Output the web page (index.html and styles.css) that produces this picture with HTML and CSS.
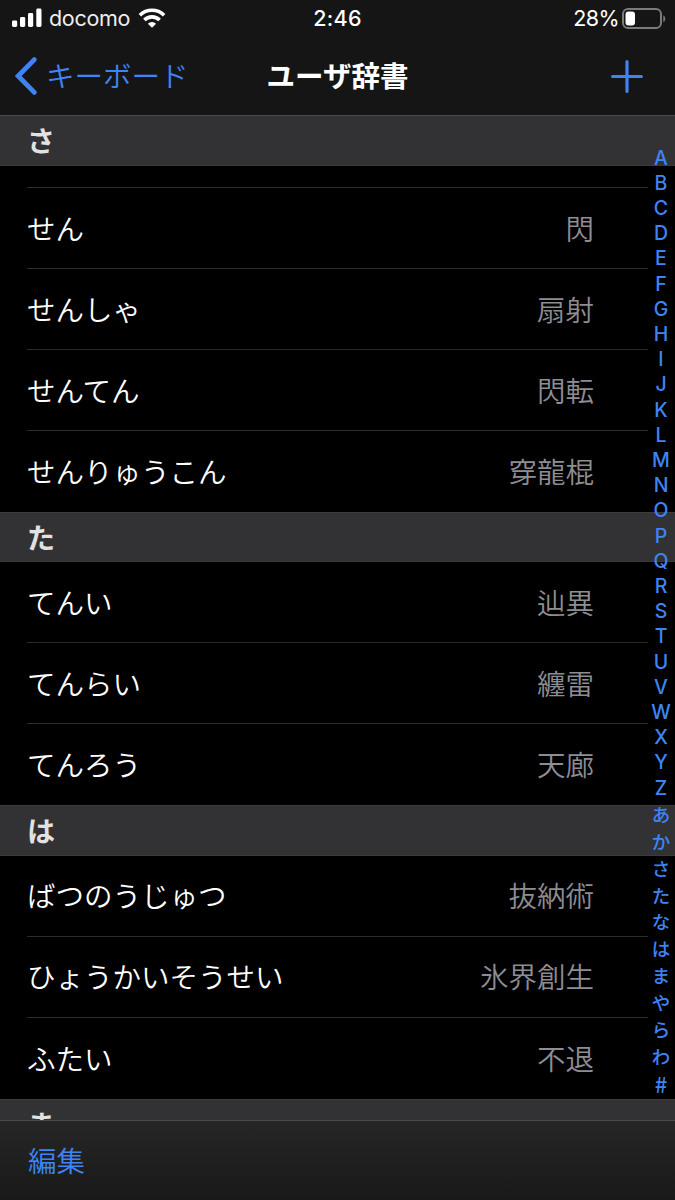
FILE: index.html
```
<!DOCTYPE html>
<html lang="ja">
<head>
  <meta charset="UTF-8" />
  <meta name="viewport" content="width=device-width, initial-scale=1.0"/>
  <title>ユーザ辞書</title>
  <link rel="stylesheet" href="styles.css">
</head>
<body>
  <div class="screen">
    <header class="top">
      <div class="status-bar">
        <div class="carrier">
          <svg class="signal" width="30" height="20" viewBox="0 0 30 20" fill="#fff">
            <rect x="0" y="12.5" width="5.2" height="6.5" rx="1.4"/>
            <rect x="8" y="9" width="5.2" height="10" rx="1.4"/>
            <rect x="16" y="5" width="5.2" height="14" rx="1.4"/>
            <rect x="24.3" y="0.5" width="5.2" height="18.5" rx="1.4"/>
          </svg>
          <span class="carrier-name">docomo</span>
          <svg class="wifi" width="28" height="20" viewBox="0 0 28 20" fill="none" stroke="#fff" stroke-width="3.6">
            <path d="M1.9 7.3a17.2 17.2 0 0 1 24.2 0"/>
            <path d="M6.4 12a10.8 10.8 0 0 1 15.2 0"/>
            <path d="M14 19.8l-4.1-4.1a5.8 5.8 0 0 1 8.2 0z" fill="#fff" stroke="none"/>
          </svg>
        </div>
        <div class="clock">2:46</div>
        <div class="battery">
          <span class="percent">28%</span>
          <svg width="44" height="22" viewBox="0 0 44 22">
            <rect x="1" y="1" width="38" height="19" rx="5" fill="none" stroke="#7b7b7b" stroke-width="2"/>
            <rect x="3.5" y="3.5" width="9.5" height="14" rx="3" fill="#fff"/>
            <path d="M41.3 7.2q2 1 2 3.5t-2 3.5z" fill="#7b7b7b"/>
          </svg>
        </div>
      </div>
      <nav class="nav-bar">
        <a class="back">
          <svg width="22" height="38" viewBox="0 0 22 38" fill="none" stroke="#3f84f3" stroke-width="4.8" stroke-linecap="round" stroke-linejoin="miter">
            <path d="M19.3 2.6L3.2 19l16.1 16.4"/>
          </svg>
          <span>キーボード</span>
        </a>
        <h1 class="title">ユーザ辞書</h1>
        <a class="add">
          <svg width="32" height="33" viewBox="0 0 32 33" stroke="#3f84f3" stroke-width="3.2" stroke-linecap="round">
            <path d="M1.6 16.5h28.8M16 1.6v29.8"/>
          </svg>
        </a>
      </nav>
    </header>

    <main class="list">
      <section>
        <h2 class="section-title pinned">さ</h2>
        <div class="row partial"></div>
        <div class="row"><span>せん</span><span class="word">閃</span></div>
        <div class="row"><span>せんしゃ</span><span class="word">扇射</span></div>
        <div class="row"><span>せんてん</span><span class="word">閃転</span></div>
        <div class="row"><span>せんりゅうこん</span><span class="word">穿龍棍</span></div>
      </section>
      <section>
        <h2 class="section-title">た</h2>
        <div class="row"><span>てんい</span><span class="word">辿異</span></div>
        <div class="row"><span>てんらい</span><span class="word">纏雷</span></div>
        <div class="row"><span>てんろう</span><span class="word">天廊</span></div>
      </section>
      <section>
        <h2 class="section-title">は</h2>
        <div class="row"><span>ばつのうじゅつ</span><span class="word">抜納術</span></div>
        <div class="row"><span>ひょうかいそうせい</span><span class="word">氷界創生</span></div>
        <div class="row"><span>ふたい</span><span class="word">不退</span></div>
      </section>
      <section>
        <h2 class="section-title">ま</h2>
      </section>
    </main>

    <footer class="toolbar"><a>編集</a></footer>

    <div class="index">
      <span>A</span><span>B</span><span>C</span><span>D</span><span>E</span><span>F</span><span>G</span>
      <span>H</span><span>I</span><span>J</span><span>K</span><span>L</span><span>M</span><span>N</span>
      <span>O</span><span>P</span><span>Q</span><span>R</span><span>S</span><span>T</span><span>U</span>
      <span>V</span><span>W</span><span>X</span><span>Y</span><span>Z</span>
      <span class="kana">あ</span><span class="kana">か</span><span class="kana">さ</span><span class="kana">た</span>
      <span class="kana">な</span><span class="kana">は</span><span class="kana">ま</span><span class="kana">や</span>
      <span class="kana">ら</span><span class="kana">わ</span><span class="kana hash">#</span>
    </div>
  </div>
</body>
</html>
```

FILE: styles.css
```
* {
  box-sizing: border-box;
}
body {
  margin: 0;
  background: #000;
  color: #fff;
  font-family: Inter, 'Noto Sans CJK JP', sans-serif;
}
.screen {
  position: relative;
  width: 675px;
  height: 1200px;
  display: flex;
  flex-direction: column;
  overflow: hidden;
}

/* status bar + navigation */
.top {
  height: 115px;
  flex: none;
  background: #151515;
}
.status-bar {
  height: 37px;
  padding: 0 9px 0 12px;
  display: grid;
  grid-template-columns: 1fr auto 1fr;
  align-items: center;
  font-size: 21.5px;
  line-height: 37px;
}
.carrier {
  display: flex;
  align-items: center;
}
.signal {
  margin-top: -2px;
}
.carrier-name {
  margin-left: 7px;
  color: #eee;
  letter-spacing: -0.3px;
}
.wifi {
  margin: -1px 0 0 8px;
}
.clock {
  margin-right: 3px;
  font-weight: 550;
  letter-spacing: 0.3px;
}
.battery {
  display: flex;
  justify-content: flex-end;
  align-items: center;
  gap: 3px;
}
.percent {
  letter-spacing: -0.6px;
}
.nav-bar {
  height: 78px;
  padding: 0 32px 0 15px;
  display: grid;
  grid-template-columns: 1fr auto 1fr;
  align-items: center;
  font-family: 'Noto Sans CJK JP', sans-serif;
}
.back {
  display: flex;
  align-items: center;
  gap: 9px;
  color: #3f84f3;
  font-size: 28.5px;
  font-weight: 350;
}
.back span,
.title {
  padding-bottom: 4px;
}
.title {
  margin: 0 -17px 0 0;
  font-size: 28.5px;
  font-weight: 700;
}
.add {
  display: flex;
  justify-content: flex-end;
}

/* word list */
.list {
  flex: 1;
  min-height: 0;
  overflow: hidden;
  font-family: 'Noto Sans CJK JP', sans-serif;
}
.section-title {
  height: 50.4px;
  margin: 0;
  padding-left: 27px;
  background: #323234;
  border-top: 1px solid #3c3c3e;
  border-bottom: 1px solid #3a3a3c;
  color: #e2e2e3;
  font-size: 28px;
  font-weight: 700;
  line-height: 48px;
}
.section-title.pinned {
  height: 51px;
  border-top-color: #4a4a4b;
}
.row {
  height: 81px;
  margin: 0 27px;
  padding: 0 54px 2px 0;
  display: flex;
  align-items: center;
  justify-content: space-between;
  border-bottom: 1px solid #2c2c2e;
  font-size: 28.5px;
  font-weight: 350;
}
.row:last-child {
  border-bottom: none;
}
.row.partial {
  height: 22px;
}
.word {
  color: #8d8d92;
}

/* bottom toolbar */
.toolbar {
  height: 80px;
  flex: none;
  padding: 0 28px 2px;
  display: flex;
  align-items: center;
  background: linear-gradient(#262627, #19191a);
  border-top: 1px solid #4a4a4b;
  color: #3f84f3;
  font-family: 'Noto Sans CJK JP', sans-serif;
  font-size: 28.5px;
  font-weight: 350;
}

/* section index, floats over the list */
.index {
  position: absolute;
  top: 145.5px;
  right: 0;
  width: 28px;
  display: flex;
  flex-direction: column;
  color: #3f84f3;
  font-size: 19.5px;
  font-weight: 550;
  line-height: 25.2px;
  text-align: center;
}
.index .kana {
  font-family: 'Noto Sans CJK JP', sans-serif;
  font-size: 18.5px;
  font-weight: 500;
  line-height: 26.9px;
}
.index .hash {
  font-size: 22px;
}
```
